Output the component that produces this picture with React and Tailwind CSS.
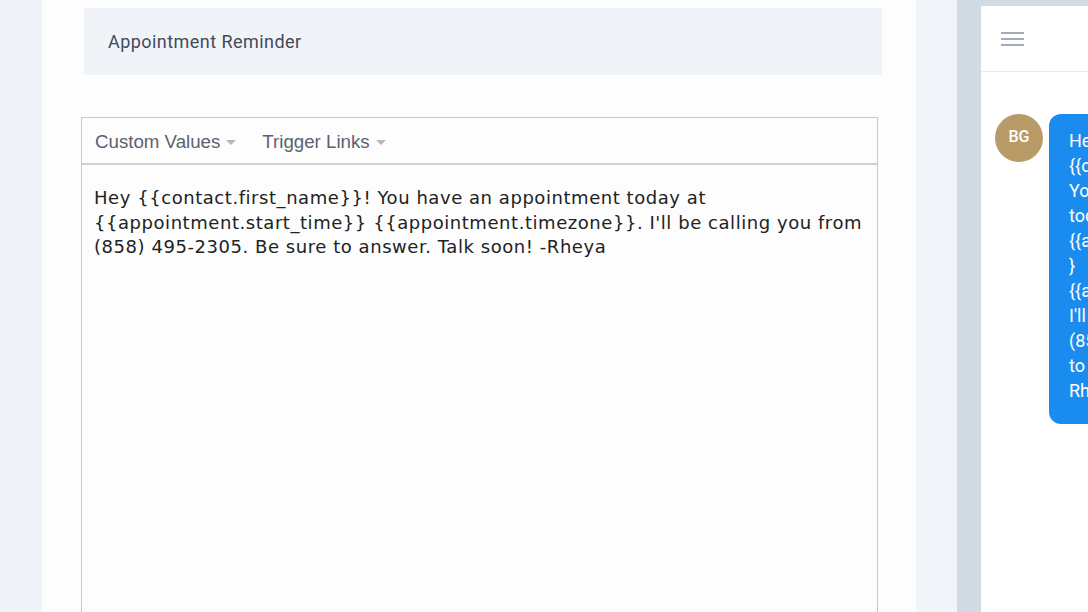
export default function App() {
  const lines = ["Hey", "{{contact.first_name}}!", "You have an appointment", "today at", "{{appointment.start_time}", "}", "{{appointment.timezone}}.", "I'll be calling you from", "(858) 495-2305. Be sure", "to answer. Talk soon! -", "Rheya"];
  return (
    <div className="flex h-[612px] w-[1088px] overflow-hidden bg-[#fdfdfd]">
      <div className="w-[42px] shrink-0 bg-[#eff3f8]" />
      <div className="w-[874px] shrink-0 bg-[#fdfdfd] pl-[39px] pr-[38px]">
        <div className="ml-[3px] mr-[-4px] mt-[8px] flex h-[67px] items-center bg-[#f0f4f9] pl-[24px]">
          <span className="text-[18px] tracking-[0.45px] text-[#434a59]" style={{ fontFamily: "Roboto, sans-serif" }}>Appointment Reminder</span>
        </div>
        <div className="mt-[42px] h-[600px] border border-[#c9c9c9]">
          <div className="flex h-[47px] items-center gap-[26px] border-b-2 border-[#cfcfcf] pl-[13px] pt-[3px] text-[18.7px] text-[#5b6270]" style={{ fontFamily: "'Liberation Sans', Arial, sans-serif" }}>
            <div className="flex items-center gap-[6px]">
              <span>Custom Values</span>
              <span className="mt-[2px] h-0 w-0 border-x-[5px] border-t-[5px] border-x-transparent border-t-[#b5b8be]" />
            </div>
            <div className="flex items-center gap-[6px]">
              <span>Trigger Links</span>
              <span className="mt-[2px] h-0 w-0 border-x-[5px] border-t-[5px] border-x-transparent border-t-[#b5b8be]" />
            </div>
          </div>
          <div className="px-[12px] pt-[21px] text-[18px] leading-[24.5px] tracking-[0.55px] text-[#222]" style={{ fontFamily: "'DejaVu Sans', Verdana, sans-serif" }}>
            Hey {"{{contact.first_name}}"}! You have an appointment today at {"{{appointment.start_time}}"} {"{{appointment.timezone}}"}. I'll be calling you from (858) 495-2305. Be sure to answer. Talk soon! -Rheya
          </div>
        </div>
      </div>
      <div className="w-[41px] shrink-0 bg-[#f1f5f9]" />
      <div className="w-[131px] shrink-0 bg-[#d3dbe2] pl-[24px] pt-[6px]">
        <div className="h-full w-[300px] bg-white">
          <div className="flex h-[66px] items-center border-b border-[#e6ebf0] pl-[20px]">
            <div className="flex flex-col gap-[4px]">
              <span className="block h-[2px] w-[23px] bg-[#a3abb6]" />
              <span className="block h-[2px] w-[23px] bg-[#a3abb6]" />
              <span className="block h-[2px] w-[23px] bg-[#a3abb6]" />
            </div>
          </div>
          <div className="mt-[42px] flex items-start pl-[14px]" style={{ fontFamily: "Roboto, sans-serif" }}>
            <div className="flex h-[48px] w-[48px] shrink-0 items-center justify-center rounded-full bg-[#b99b68] pb-[3px] text-[16px] font-medium text-white">BG</div>
            <div className="ml-[6px] w-[240px] rounded-[12px] bg-[#1a8cf0] pb-[21px] pl-[20px] pt-[14px] text-[18px] leading-[25px] text-white">
              {lines.map((l, i) => (
                <div key={i} className="whitespace-nowrap">{l}</div>
              ))}
            </div>
          </div>
        </div>
      </div>
    </div>
  );
}
